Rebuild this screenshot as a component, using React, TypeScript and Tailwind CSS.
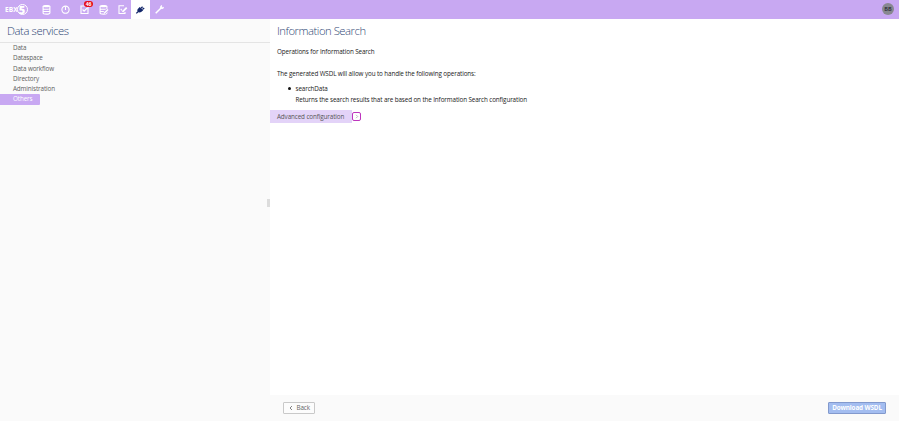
import React from "react";

const sections = ["Data", "Dataspace", "Data workflow", "Directory", "Administration", "Others"];

function Tab({ active, children }: { active?: boolean; children: React.ReactNode }) {
  return (
    <button className={`flex h-[18.5px] w-[18.8px] items-center justify-center ${active ? "bg-white text-[#14286b]" : "text-white"}`}>
      <svg width="11" height="11" viewBox="0 0 11 11" fill="none" stroke="currentColor" strokeWidth="1.1" className="overflow-visible">
        {children}
      </svg>
    </button>
  );
}

function Database() {
  return (
    <>
      <path fill="currentColor" stroke="none" d="M1.6 2.3C1.6 .5 9.4 .5 9.4 2.3 9.4 3.6 1.6 3.6 1.6 2.3Z" />
      <path d="M2.1 2.2v6.9c0 1.4 6.8 1.4 6.8 0V2.2M2.1 4.5c0 1 6.8 1 6.8 0M2.1 6.8c0 1 6.8 1 6.8 0" />
    </>
  );
}

function Header() {
  return (
    <header className="flex h-[18.5px] shrink-0 items-center bg-[#c8a8f2]">
      <div className="flex w-[37.5px] items-center pl-[5px] text-white">
        <span className="w-[12px] text-[7.5px] leading-none font-bold"><span className="inline-block origin-left scale-x-[.88]">EBX</span></span>
        <span className="flex h-[11px] w-[11px] items-center justify-center rounded-full border-[1.5px] border-white pr-[1px] text-[11px] leading-none font-extrabold text-white">5</span>
      </div>
      <nav className="flex">
        <Tab><Database /></Tab>
        <Tab>
          <circle cx="5.5" cy="5.7" r="3.6" />
          <path d="M5.5 2.5v3.5" />
        </Tab>
        <div className="relative">
          <Tab>
            <path d="M2 2h7v7.5H2ZM3.6 5.5l1.5 1.6 3-3" />
          </Tab>
          <span className="absolute top-[1px] left-[9px] flex h-[6px] w-[9px] items-center justify-center rounded-full bg-[#e60d19] text-[5px] leading-none font-bold text-white">46</span>
        </div>
        <Tab>
          <Database />
          <path stroke="#c8a8f2" strokeWidth="3" d="M6 9.5 10 5.5" />
          <path strokeWidth="1.5" d="M6 9.5 10 5.5" />
        </Tab>
        <Tab>
          <path d="M7 1.8H2v7.7h6V8M3.7 4.8l1.3 1.7" />
          <path strokeWidth="1.8" d="M5.5 7.8 9.7 3.6" />
        </Tab>
        <Tab active>
          <path fill="currentColor" stroke="none" d="M3 4.7 4.7 3 8.2 6.2 6.5 7.8C5.2 8.8 3.8 8.6 2.9 8.1 2.1 7 2.1 5.6 3 4.7Z" />
          <path d="M1.3 9.4 3 7.8M6 4.2 7.6 2.7M7.4 5.5 9.2 4" strokeWidth="1.3" />
        </Tab>
        <Tab>
          <path strokeWidth="1.5" d="M1.7 9.3 7.3 3.7" />
          <path strokeWidth="1.4" d="M7.8 1.5 6.7 3.1 8 4.4l1.7-1" />
        </Tab>
      </nav>
      <div className="mr-[5px] ml-auto flex h-3 w-3 items-center justify-center rounded-full bg-[#888890] text-[5.5px] leading-none font-semibold text-[#252533]">BB</div>
    </header>
  );
}

function Sidebar() {
  return (
    <aside className="flex w-[270px] shrink-0 flex-col bg-[#fafafa]">
      <h1 className="h-[24px] border-b border-[#e4e4e4] pl-[7px] text-[11.3px] leading-[24px] font-light tracking-[-.42px] text-[#2f4775]">Data services</h1>
      <ul className="pt-[.5px] text-[6.3px] tracking-[-.11px] text-[#606060]">
        {sections.map((name) => (
          <li
            key={name}
            className={`h-[10.3px] pl-[13px] leading-[10.3px] ${name === "Others" ? "w-10 rounded-r-[1px] bg-[#c8a8f2] text-white" : ""}`}
          >
            {name}
          </li>
        ))}
      </ul>
      <div className="mt-[94.5px] ml-auto h-2 w-[3px] bg-[#dcdcdc]" />
    </aside>
  );
}

export default function App() {
  return (
    <div className="flex h-[421px] w-[899px] flex-col overflow-hidden bg-white font-['Open_Sans',sans-serif]">
      <Header />
      <div className="flex min-h-0 flex-1">
        <Sidebar />
        <main className="flex flex-1 flex-col">
          <div className="flex-1 text-[6.3px] tracking-[-.11px] text-[#222]">
            <h2 className="pl-[7px] text-[11.3px] leading-[24px] font-light tracking-[-.48px] text-[#2f4775]">Information Search</h2>
            <p className="mt-[4px] pl-[7px] leading-[10px]">Operations for Information Search</p>
            <p className="mt-[12px] pl-[7px] leading-[10px]">The generated WSDL will allow you to handle the following operations:</p>
            <ul className="mt-[5px] pl-[18px]">
              <li className="flex items-start leading-[10px]">
                <span className="mt-[3.5px] mr-[4.5px] h-[3px] w-[3px] rounded-full bg-[#111]" />
                <div>
                  <p>searchData</p>
                  <p className="mt-[1px]">Returns the search results that are based on the Information Search configuration</p>
                </div>
              </li>
            </ul>
            <div className="mt-[5px] flex items-center">
              <button className="h-[13px] w-[82px] bg-[#e3d3f8] pl-[7px] text-left leading-[13px] tracking-[-.11px] text-[#555]">Advanced configuration</button>
              <button className="flex h-[9px] w-[9px] items-center justify-center rounded-[2px] border border-[#bd35bd] text-[#aaa]">
                <svg width="4" height="5" viewBox="0 0 4 5" fill="none" stroke="currentColor" strokeWidth=".8"><path d="M1 .8 2.7 2.5 1 4.2" /></svg>
              </button>
            </div>
          </div>
          <footer className="flex h-[26px] shrink-0 items-center justify-between bg-[#fafafa] pr-[13px] pl-[12.5px] text-[6.3px]">
            <button className="flex h-[12px] w-[32.5px] items-center rounded-[1px] border border-[#c9c9c9] bg-[#fcfcfc] pl-[5px] text-[#666]">
              <svg width="4" height="6" viewBox="0 0 4 6" fill="none" stroke="currentColor" strokeWidth=".8"><path d="M3 1 1 3l2 2" /></svg>
              <span className="ml-[4px] tracking-[-.1px]">Back</span>
            </button>
            <button className="h-[12px] w-[58px] rounded-[1px] border border-[#8299cd] bg-[#a3bdf0] text-center leading-[10px] font-bold tracking-[-.11px] whitespace-nowrap text-white">Download WSDL</button>
          </footer>
        </main>
      </div>
    </div>
  );
}
